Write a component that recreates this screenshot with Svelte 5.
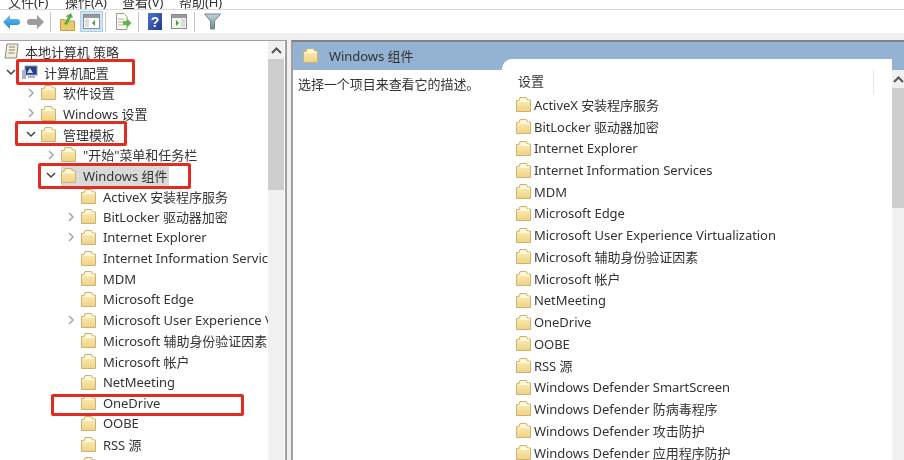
<script>
  const treeItems = [
    { label: '软件设置', depth: 2, arrow: 'right' },
    { label: 'Windows 设置', depth: 2, arrow: 'right' },
    { label: '管理模板', depth: 2, arrow: 'down' },
    { label: '"开始"菜单和任务栏', depth: 3, arrow: 'right' },
    { label: 'Windows 组件', depth: 3, arrow: 'down', selected: true },
    { label: 'ActiveX 安装程序服务', depth: 4 },
    { label: 'BitLocker 驱动器加密', depth: 4, arrow: 'right' },
    { label: 'Internet Explorer', depth: 4, arrow: 'right' },
    { label: 'Internet Information Services', depth: 4 },
    { label: 'MDM', depth: 4 },
    { label: 'Microsoft Edge', depth: 4 },
    { label: 'Microsoft User Experience Virtualization', depth: 4, arrow: 'right' },
    { label: 'Microsoft 辅助身份验证因素', depth: 4 },
    { label: 'Microsoft 帐户', depth: 4 },
    { label: 'NetMeeting', depth: 4 },
    { label: 'OneDrive', depth: 4 },
    { label: 'OOBE', depth: 4 },
    { label: 'RSS 源', depth: 4 },
    { label: 'Windows Defender SmartScreen', depth: 4 }
  ];

  const settings = [
    'ActiveX 安装程序服务',
    'BitLocker 驱动器加密',
    'Internet Explorer',
    'Internet Information Services',
    'MDM',
    'Microsoft Edge',
    'Microsoft User Experience Virtualization',
    'Microsoft 辅助身份验证因素',
    'Microsoft 帐户',
    'NetMeeting',
    'OneDrive',
    'OOBE',
    'RSS 源',
    'Windows Defender SmartScreen',
    'Windows Defender 防病毒程序',
    'Windows Defender 攻击防护',
    'Windows Defender 应用程序防护'
  ];

  const menus = ['文件(F)', '操作(A)', '查看(V)', '帮助(H)'];
</script>

{#snippet folder()}
  <svg class="folder" width="15" height="15" viewBox="0 0 15 15">
    <path d="M.5 3.5 H3 L4 .5 H10.5 L11.5 3 H14.5 V14.5 H.5 Z" fill="url(#folderFill)" stroke="#cdb274" />
    <path d="M1.5 4.5 H4 L5 1.5 H10 L10.6 3.6 H13.5 V5 H1.5 Z" fill="#fff9e0" />
  </svg>
{/snippet}

{#snippet chevron(dir)}
  <svg class="chev" width="12" height="12" viewBox="0 0 12 12">
    {#if dir === 'right'}
      <path d="M4 2 L8 6 L4 10" fill="none" stroke="#a6a6a6" stroke-width="1.5" />
    {:else if dir === 'down'}
      <path d="M2 4 L6 8 L10 4" fill="none" stroke="#404040" stroke-width="1.5" />
    {/if}
  </svg>
{/snippet}

<div class="window">
  <svg class="defs" width="0" height="0">
    <defs>
      <linearGradient id="folderFill" x1="0" y1="0" x2="0" y2="1">
        <stop offset="0" stop-color="#fdf0bf" />
        <stop offset="1" stop-color="#efd283" />
      </linearGradient>
      <linearGradient id="backFill" x1="0" y1="0" x2="0" y2="1">
        <stop offset="0" stop-color="#6cc0f0" />
        <stop offset="1" stop-color="#1f86d4" />
      </linearGradient>
      <linearGradient id="helpFill" x1="0" y1="0" x2="1" y2="1">
        <stop offset="0" stop-color="#4d74cf" />
        <stop offset="1" stop-color="#1f3a8e" />
      </linearGradient>
      <linearGradient id="funnelFill" x1="0" y1="0" x2="0" y2="1">
        <stop offset="0" stop-color="#c3d3da" />
        <stop offset="1" stop-color="#6f8a96" />
      </linearGradient>
    </defs>
  </svg>

  <div class="menubar">
    {#each menus as m}<span>{m}</span>{/each}
  </div>

  <div class="toolbar">
    <div class="tools first">
      <svg width="17" height="14" viewBox="0 0 17 14"><path d="M0 7 L7 0 V4 H14 Q17 4 17 7 Q17 10 14 10 H7 V14 Z" fill="url(#backFill)" /></svg>
      <svg width="17" height="14" viewBox="0 0 17 14"><path d="M17 7 L10 0 V4 H3 Q0 4 0 7 Q0 10 3 10 H10 V14 Z" fill="#9c9c9c" /></svg>
    </div>
    <i class="sep"></i>
    <div class="tools tight">
      <svg width="15" height="18" viewBox="0 0 15 18"><path d="M.5 6.5 H5 L6 8 H14.5 V17.5 H.5 Z" fill="#e9c968" stroke="#c2a349" /><path d="M4 11 L8 4 L5.5 3.5 L11 0 L13 5 L11 4.5 L7 12 Z" fill="#58ad3f" /></svg>
      <span class="active">
        <svg width="17" height="15" viewBox="0 0 17 15"><rect x=".5" y=".5" width="16" height="14" fill="#fff" stroke="#8a8a8a" /><rect x="1" y="1" width="15" height="3" fill="#9a9a9a" /><rect x="2" y="5" width="4" height="8" fill="#dcdcdc" /><path d="M12 6 L9 9 L12 12 Z" fill="#3f9e3f" /></svg>
      </span>
    </div>
    <i class="sep"></i>
    <div class="tools">
      <svg width="17" height="17" viewBox="0 0 17 17"><path d="M1.5 .5 H9 L12 3.5 V16.5 H1.5 Z" fill="#fdfdf4" stroke="#9a9a8a" /><path d="M3 6 H9 M3 9 H8 M3 12 H8" stroke="#b5b5a5" /><path d="M8 8 H12 V5.5 L16.5 10 L12 14.5 V12 H8 Z" fill="#5cb84a" /></svg>
    </div>
    <i class="sep"></i>
    <div class="tools wide">
      <svg width="14" height="17" viewBox="0 0 14 17"><rect width="14" height="17" fill="url(#helpFill)" /><text x="7" y="14" text-anchor="middle" font-size="14" font-weight="700" font-family="Liberation Sans" fill="#fff">?</text></svg>
      <svg width="16" height="15" viewBox="0 0 16 15"><rect x=".5" y=".5" width="15" height="14" fill="#f4f4ee" stroke="#8a8a8a" /><rect x="1" y="1" width="14" height="3" fill="#9a9a9a" /><rect x="10" y="5" width="4" height="8" fill="#dcdcdc" /><path d="M5 6 L8 9 L5 12 Z" fill="#3f9e3f" /></svg>
    </div>
    <i class="sep"></i>
    <div class="tools">
      <svg width="17" height="17" viewBox="0 0 17 17"><path d="M.5 1 H16.5 L10.5 8 V16 H6.5 V8 Z" fill="url(#funnelFill)" stroke="#71858e" /></svg>
    </div>
  </div>

  <div class="panes">
    <div class="tree-pane">
      <div class="tree">
        <div class="row root">
          <svg class="doc" width="16" height="17" viewBox="0 0 16 17"><path d="M3 1 H14 L12.5 15 H1 Z" fill="#f3eedd" stroke="#8c8674" /><path d="M5 4 H11 M4.7 7 H11 M4.4 10 H10.5" stroke="#8c8674" /></svg>
          <span>本地计算机 策略</span>
        </div>
        <div class="row computer">
          {@render chevron('down')}
          <svg class="pc" width="18" height="15" viewBox="0 0 16 15"><rect x="3" y="1" width="12" height="9" fill="#27408b" stroke="#8c97b0" /><path d="M5 8 L8 3 L11 8 Z" fill="#cfe0f7" /><rect x="0" y="5" width="4" height="9" fill="#a9b3c4" /><rect x="6" y="11" width="7" height="2" fill="#a9b3c4" /></svg>
          <span>计算机配置</span>
        </div>
        {#each treeItems as item}
          <div class="row" style="padding-left: {(item.depth - 1) * 20 + 5}px">
            {@render chevron(item.arrow)}
            <span class="entry" class:selected={item.selected}>
              {@render folder()}
              <span class="name">{item.label}</span>
            </span>
          </div>
        {/each}
      </div>
      <div class="scrollbar">
        <span class="cap"><svg width="11" height="7" viewBox="0 0 11 7"><path d="M1 6 L5.5 1.5 L10 6" fill="none" stroke="#555" stroke-width="2" /></svg></span>
        <div class="thumb"></div>
      </div>
    </div>

    <div class="detail-pane">
      <div class="detail-head">
        {@render folder()}
        <span>Windows 组件</span>
      </div>
      <div class="detail-body">
        <p class="hint">选择一个项目来查看它的描述。</p>
        <div class="list">
          <div class="col-title">设置</div>
          {#each settings as s}
            <div class="list-row">
              {@render folder()}
              <span>{s}</span>
            </div>
          {/each}
        </div>
        <div class="scrollbar right">
          <span class="cap"><svg width="11" height="7" viewBox="0 0 11 7"><path d="M1 6 L5.5 1.5 L10 6" fill="none" stroke="#555" stroke-width="2" /></svg></span>
          <div class="thumb short"></div>
        </div>
      </div>
    </div>
  </div>

  <i class="mark" style="left:16px;top:59px;width:119px;height:26px"></i>
  <i class="mark" style="left:15px;top:121px;width:112px;height:25px"></i>
  <i class="mark" style="left:38px;top:163px;width:153px;height:26px"></i>
  <i class="mark" style="left:51px;top:394px;width:193px;height:22px"></i>
</div>

<style>
  :global(body) {
    margin: 0;
    background: #fff;
  }

  .window {
    position: relative;
    width: 904px;
    height: 460px;
    overflow: hidden;
    background: #f0f0f0;
    font-family: 'Noto Sans', 'Noto Sans CJK SC', sans-serif;
    font-size: 13px;
    letter-spacing: -0.05px;
    color: #333;
    filter: blur(0.4px);
  }

  .defs {
    position: absolute;
  }

  .menubar {
    height: 9px;
    background: #fff;
    display: flex;
    gap: 17px;
    padding-left: 8px;
    line-height: 4px;
    overflow: hidden;
    border-bottom: 1px solid #d8d8d8;
  }

  .menubar span {
    width: 40px;
    white-space: nowrap;
  }

  .toolbar {
    height: 23px;
    background: #fff;
    display: grid;
    grid-template-columns: 50px 1px 54px 1px 32px 1px 55px 1px auto;
    align-items: center;
  }

  .tools {
    display: flex;
    align-items: center;
    padding-left: 9px;
  }

  .tools.first {
    padding-left: 3px;
    gap: 7px;
  }

  .tools.tight {
    gap: 5px;
  }

  .tools.wide {
    gap: 9px;
  }

  .sep {
    width: 1px;
    height: 20px;
    background: #c8c8c8;
  }

  .active {
    display: flex;
    align-items: center;
    justify-content: center;
    width: 23px;
    height: 21px;
    background: #cde6f7;
    border: 1px solid #a5d0ee;
    box-sizing: border-box;
  }

  .panes {
    display: flex;
    gap: 4px;
    height: 420px;
    padding-top: 7px;
  }

  .tree-pane {
    width: 287px;
    flex: none;
    background: #fff;
    display: flex;
    border-top: 1px solid #a0a0a0;
    border-right: 2px solid #a0a0a0;
    box-sizing: border-box;
    overflow: hidden;
  }

  .tree {
    width: 268px;
    flex: none;
    overflow: hidden;
  }

  .row {
    height: 20.68px;
    display: flex;
    align-items: center;
    white-space: nowrap;
    box-sizing: border-box;
  }

  .row > span:last-child:not(.entry) {
    margin-left: 5px;
  }

  .root {
    padding-left: 4px;
  }

  .computer {
    padding-left: 5px;
  }

  .chev {
    flex: none;
    margin-right: 4px;
  }

  .pc {
    flex: none;
  }

  .entry {
    display: inline-flex;
    align-items: center;
    gap: 7px;
    height: 21px;
    padding-right: 2px;
  }

  .entry.selected {
    background: #d9d9d9;
  }

  .folder {
    flex: none;
  }

  .scrollbar {
    width: 16px;
    flex: none;
    background: #f0f0f0;
    display: flex;
    flex-direction: column;
  }

  .cap {
    height: 18px;
    flex: none;
    display: flex;
    align-items: center;
    justify-content: center;
  }

  .thumb {
    height: 131px;
    background: #cdcdcd;
  }

  .thumb.short {
    height: 120px;
  }

  .detail-pane {
    flex: 1;
    min-width: 0;
    background: #fff;
    border-top: 2px solid #808080;
    border-left: 2px solid #a0a0a0;
    box-sizing: border-box;
    display: flex;
    flex-direction: column;
  }

  .detail-head {
    height: 28px;
    flex: none;
    background: #94b2d1;
    display: flex;
    align-items: center;
    gap: 11px;
    padding-left: 10px;
    padding-bottom: 2px;
    box-sizing: border-box;
  }

  .detail-body {
    flex: 1;
    display: flex;
    min-height: 0;
  }

  .hint {
    width: 209px;
    margin: 0;
    padding: 4px 0 0 5px;
    box-sizing: border-box;
    flex: none;
    white-space: nowrap;
  }

  .list {
    flex: 1;
    min-width: 0;
    overflow: hidden;
    margin-top: -11px;
    padding: 11px 0 0 14px;
    background: #fff;
    border-top-left-radius: 10px;
  }

  .col-title {
    height: 24px;
    padding-left: 2px;
    line-height: 22px;
    margin-right: 18px;
    border-right: 1px solid #e6e6e6;
  }

  .list-row {
    height: 21.72px;
    display: flex;
    align-items: center;
    gap: 3px;
    white-space: nowrap;
  }

  .scrollbar.right {
    width: 12px;
    margin-top: 0;
  }

  .scrollbar.right .thumb {
    width: 12px;
  }

  .mark {
    position: absolute;
    box-sizing: border-box;
    border: 3px solid #e02c22;
    border-radius: 2px;
  }
</style>
